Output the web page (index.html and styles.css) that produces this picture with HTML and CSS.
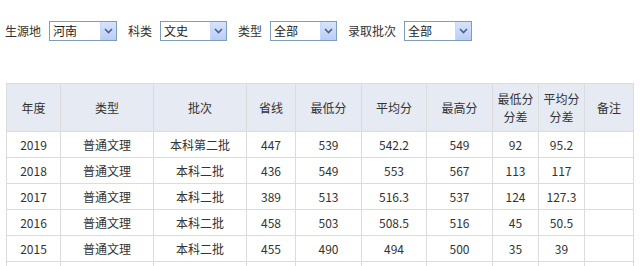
FILE: index.html
```html
<!DOCTYPE html>
<html lang="zh-CN">
<head>
<meta charset="utf-8">
<link rel="stylesheet" href="styles.css">
</head>
<body>
<div class="filters">
  <span class="lbl">生源地</span>
  <div class="sel w68"><span class="val">河南</span><span class="btn"><svg width="9" height="6" viewBox="0 0 9 6"><path d="M1 1 L4.5 4.5 L8 1" fill="none" stroke="#4d6185" stroke-width="1.6"/></svg></span></div>
  <span class="lbl">科类</span>
  <div class="sel w67"><span class="val">文史</span><span class="btn"><svg width="9" height="6" viewBox="0 0 9 6"><path d="M1 1 L4.5 4.5 L8 1" fill="none" stroke="#4d6185" stroke-width="1.6"/></svg></span></div>
  <span class="lbl">类型</span>
  <div class="sel w67"><span class="val">全部</span><span class="btn"><svg width="9" height="6" viewBox="0 0 9 6"><path d="M1 1 L4.5 4.5 L8 1" fill="none" stroke="#4d6185" stroke-width="1.6"/></svg></span></div>
  <span class="lbl">录取批次</span>
  <div class="sel w68"><span class="val">全部</span><span class="btn"><svg width="9" height="6" viewBox="0 0 9 6"><path d="M1 1 L4.5 4.5 L8 1" fill="none" stroke="#4d6185" stroke-width="1.6"/></svg></span></div>
</div>
<table class="scores">
  <colgroup>
    <col class="c54"><col class="c93"><col class="c93"><col class="c49"><col class="c66"><col class="c65"><col class="c66"><col class="c46"><col class="c46"><col class="c49">
  </colgroup>
  <thead>
    <tr><th>年度</th><th>类型</th><th>批次</th><th>省线</th><th>最低分</th><th>平均分</th><th>最高分</th><th>最低分<br>分差</th><th>平均分<br>分差</th><th>备注</th></tr>
  </thead>
  <tbody>
    <tr><td>2019</td><td>普通文理</td><td>本科第二批</td><td>447</td><td>539</td><td>542.2</td><td>549</td><td>92</td><td>95.2</td><td></td></tr>
    <tr><td>2018</td><td>普通文理</td><td>本科二批</td><td>436</td><td>549</td><td>553</td><td>567</td><td>113</td><td>117</td><td></td></tr>
    <tr><td>2017</td><td>普通文理</td><td>本科二批</td><td>389</td><td>513</td><td>516.3</td><td>537</td><td>124</td><td>127.3</td><td></td></tr>
    <tr><td>2016</td><td>普通文理</td><td>本科二批</td><td>458</td><td>503</td><td>508.5</td><td>516</td><td>45</td><td>50.5</td><td></td></tr>
    <tr><td>2015</td><td>普通文理</td><td>本科二批</td><td>455</td><td>490</td><td>494</td><td>500</td><td>35</td><td>39</td><td></td></tr>
    <tr><td>&nbsp;</td><td></td><td></td><td></td><td></td><td></td><td></td><td></td><td></td><td></td></tr>
  </tbody>
</table>
</body>
</html>
```
FILE: styles.css
```css
html, body {
  margin: 0;
  padding: 0;
  background: #fff;
}
body {
  font-family: "Noto Sans CJK SC", "Noto Sans", sans-serif;
  font-size: 12px;
  color: #333;
  overflow: hidden;
}
.filters {
  display: flex;
  align-items: center;
  height: 20px;
  padding: 21px 0 0 5px;
}
.lbl {
  line-height: 20px;
  margin-right: 8px;
}
.sel {
  box-sizing: border-box;
  height: 20px;
  border: 1px solid #7f9db9;
  background: #fff;
  display: flex;
  align-items: stretch;
  justify-content: space-between;
  margin-right: 11px;
}
.w68 { width: 68px; }
.w67 { width: 67px; }
.val {
  line-height: 18px;
  padding-left: 3px;
  color: #222;
}
.btn {
  width: 15px;
  background: linear-gradient(#d6e3fd, #b9cdf6);
  border-left: 1px solid #c8d7f5;
  display: flex;
  align-items: center;
  justify-content: center;
}
.scores {
  margin: 42px 0 0 6px;
  border-collapse: collapse;
  table-layout: fixed;
  width: 627px;
  border: 1px solid #dcdcdc;
}
.c54 { width: 54px; }
.c93 { width: 93px; }
.c49 { width: 49px; }
.c66 { width: 66px; }
.c65 { width: 65px; }
.c46 { width: 46px; }
.scores th {
  background: #e5eaf3;
  font-weight: normal;
  height: 47px;
  padding: 0;
  line-height: 18px;
  border: 1px solid #dcdcdc;
  border-top: 0;
  text-align: center;
  vertical-align: middle;
}
.scores td {
  height: 25px;
  padding: 0;
  border: 1px solid #dcdcdc;
  text-align: center;
  vertical-align: middle;
  line-height: 16px;
}
```
